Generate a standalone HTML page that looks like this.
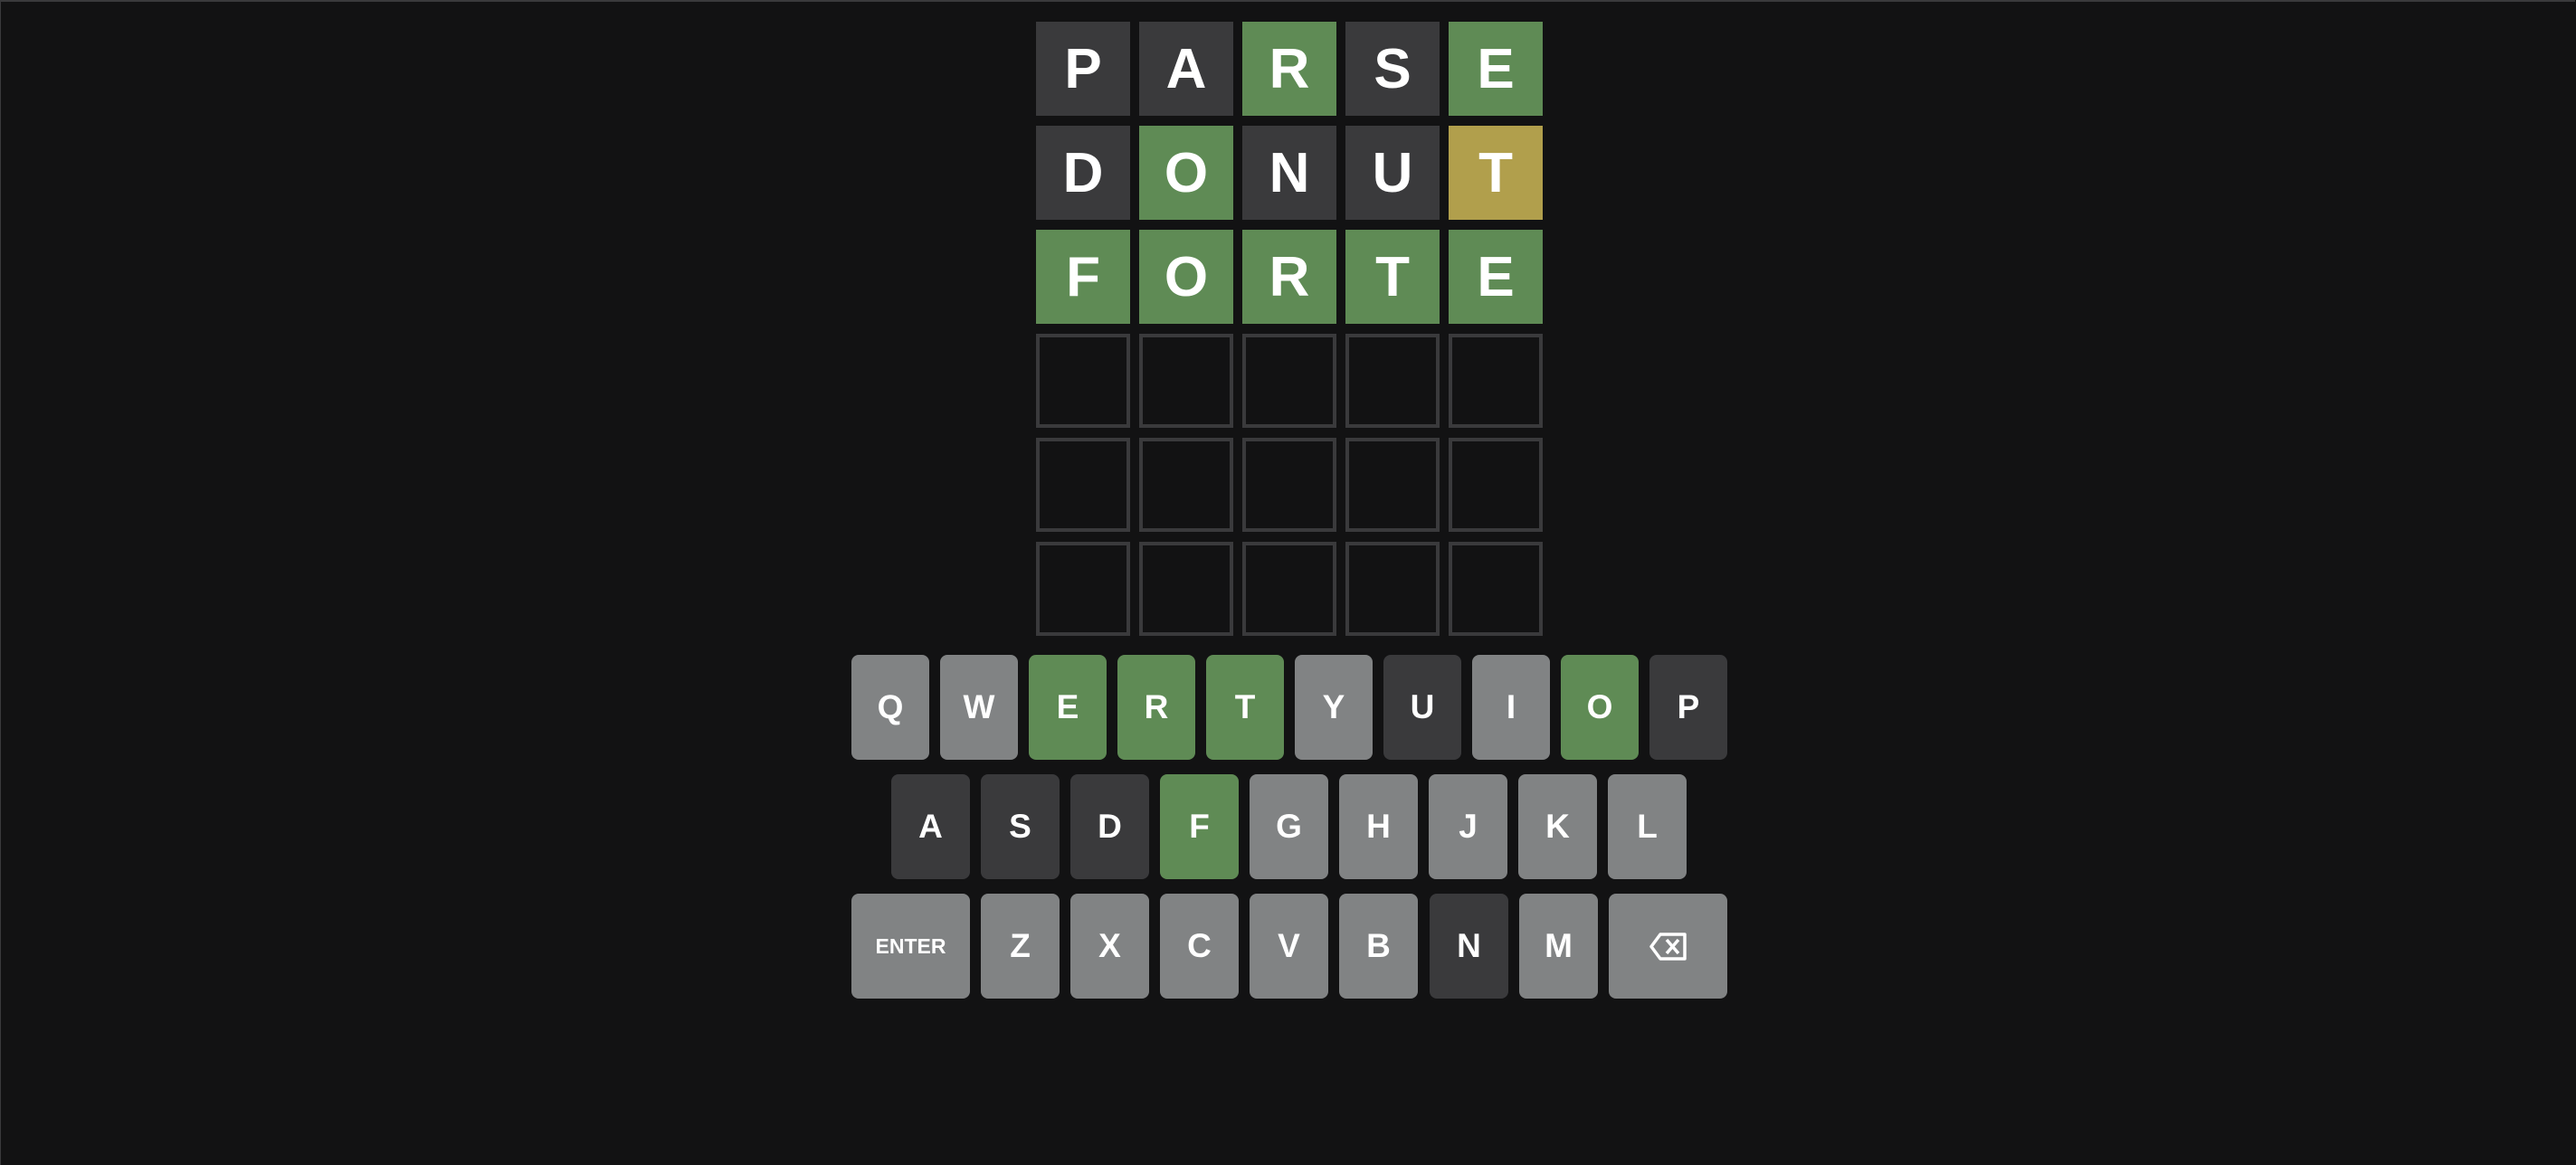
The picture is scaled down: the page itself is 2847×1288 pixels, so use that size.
<!DOCTYPE html>
<html><head><meta charset="utf-8"><style>
html,body{margin:0;padding:0;background:#121213;}
body{width:2847px;height:1288px;position:relative;overflow:hidden;font-family:"Liberation Sans",sans-serif;font-weight:bold;color:#fff;}
.frame{position:absolute;left:0;top:0;width:2845px;height:1286px;border-top:2px solid #3a3a3c;border-left:1px solid #3a3a3c;}
.t{position:absolute;width:104px;height:104px;display:flex;align-items:center;justify-content:center;font-size:62px;box-sizing:border-box;}
.e{border:4px solid #3a3a3c;}
.k{position:absolute;height:116px;border-radius:8px;display:flex;align-items:center;justify-content:center;font-size:37px;background:#818384;}
.g{background:#5f8b55;}.y{background:#b19f4c;}.d{background:#3a3a3c;}
</style></head><body>
<div class="frame"></div>
<div class="t d" style="left:1145px;top:24px">P</div>
<div class="t d" style="left:1259px;top:24px">A</div>
<div class="t g" style="left:1373px;top:24px">R</div>
<div class="t d" style="left:1487px;top:24px">S</div>
<div class="t g" style="left:1601px;top:24px">E</div>
<div class="t d" style="left:1145px;top:139px">D</div>
<div class="t g" style="left:1259px;top:139px">O</div>
<div class="t d" style="left:1373px;top:139px">N</div>
<div class="t d" style="left:1487px;top:139px">U</div>
<div class="t y" style="left:1601px;top:139px">T</div>
<div class="t g" style="left:1145px;top:254px">F</div>
<div class="t g" style="left:1259px;top:254px">O</div>
<div class="t g" style="left:1373px;top:254px">R</div>
<div class="t g" style="left:1487px;top:254px">T</div>
<div class="t g" style="left:1601px;top:254px">E</div>
<div class="t e" style="left:1145px;top:369px"></div><div class="t e" style="left:1259px;top:369px"></div><div class="t e" style="left:1373px;top:369px"></div><div class="t e" style="left:1487px;top:369px"></div><div class="t e" style="left:1601px;top:369px"></div>
<div class="t e" style="left:1145px;top:484px"></div><div class="t e" style="left:1259px;top:484px"></div><div class="t e" style="left:1373px;top:484px"></div><div class="t e" style="left:1487px;top:484px"></div><div class="t e" style="left:1601px;top:484px"></div>
<div class="t e" style="left:1145px;top:599px"></div><div class="t e" style="left:1259px;top:599px"></div><div class="t e" style="left:1373px;top:599px"></div><div class="t e" style="left:1487px;top:599px"></div><div class="t e" style="left:1601px;top:599px"></div>

<div class="k" style="left:941px;top:724px;width:86px">Q</div>
<div class="k" style="left:1039px;top:724px;width:86px">W</div>
<div class="k g" style="left:1137px;top:724px;width:86px">E</div>
<div class="k g" style="left:1235px;top:724px;width:86px">R</div>
<div class="k g" style="left:1333px;top:724px;width:86px">T</div>
<div class="k" style="left:1431px;top:724px;width:86px">Y</div>
<div class="k d" style="left:1529px;top:724px;width:86px">U</div>
<div class="k" style="left:1627px;top:724px;width:86px">I</div>
<div class="k g" style="left:1725px;top:724px;width:86px">O</div>
<div class="k d" style="left:1823px;top:724px;width:86px">P</div>

<div class="k d" style="left:985px;top:856px;width:87px">A</div>
<div class="k d" style="left:1084px;top:856px;width:87px">S</div>
<div class="k d" style="left:1183px;top:856px;width:87px">D</div>
<div class="k g" style="left:1282px;top:856px;width:87px">F</div>
<div class="k" style="left:1381px;top:856px;width:87px">G</div>
<div class="k" style="left:1480px;top:856px;width:87px">H</div>
<div class="k" style="left:1579px;top:856px;width:87px">J</div>
<div class="k" style="left:1678px;top:856px;width:87px">K</div>
<div class="k" style="left:1777px;top:856px;width:87px">L</div>

<div class="k" style="left:941px;top:988px;width:131px;font-size:23px">ENTER</div>
<div class="k" style="left:1084px;top:988px;width:87px">Z</div>
<div class="k" style="left:1183px;top:988px;width:87px">X</div>
<div class="k" style="left:1282px;top:988px;width:87px">C</div>
<div class="k" style="left:1381px;top:988px;width:87px">V</div>
<div class="k" style="left:1480px;top:988px;width:87px">B</div>
<div class="k d" style="left:1580px;top:988px;width:87px">N</div>
<div class="k" style="left:1679px;top:988px;width:87px">M</div>
<div class="k" style="left:1778px;top:988px;width:131px">
<svg width="42" height="31" viewBox="0 0 42 31"><path d="M12 2 H39 V29 H12 L2 15.5 Z" fill="none" stroke="#fff" stroke-width="3.5" stroke-linejoin="round"/><path d="M19 8 L32 23 M32 8 L19 23" stroke="#fff" stroke-width="3.5"/></svg>
</div>
</body></html>
